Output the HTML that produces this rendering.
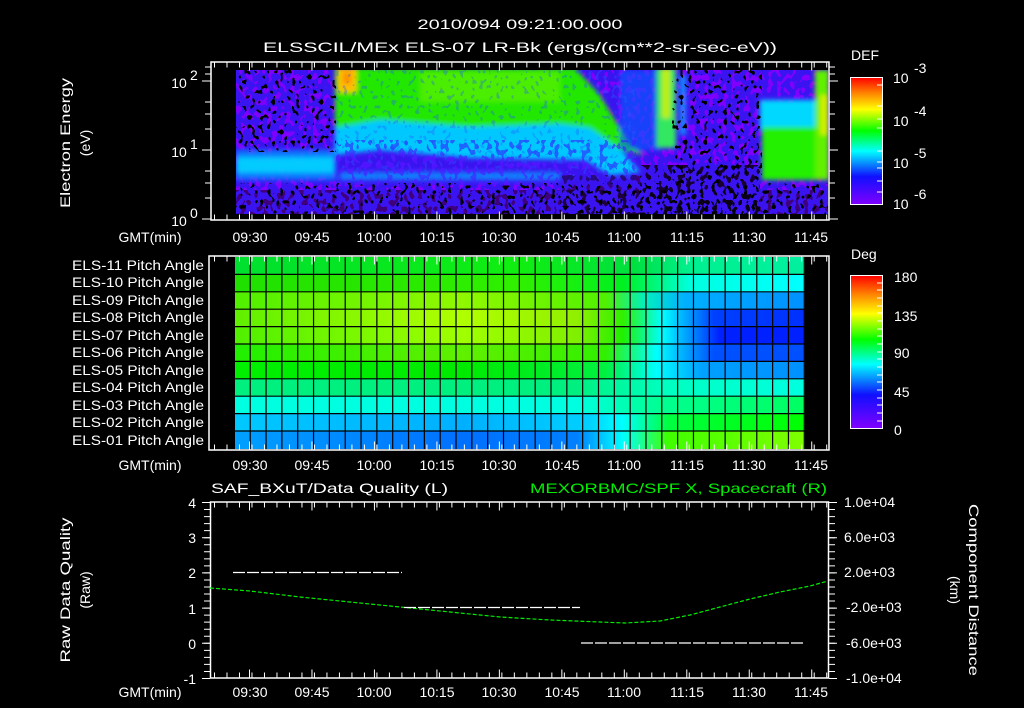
<!DOCTYPE html>
<html><head><meta charset="utf-8"><style>
html,body{margin:0;padding:0;background:#000;}
svg{display:block;}
text{font-family:"Liberation Sans",sans-serif;fill:#fff;font-size:14px;}
</style></head><body>
<svg width="1024" height="708" viewBox="0 0 1024 708" xmlns="http://www.w3.org/2000/svg">
<defs>
<filter id="blur" x="-10%" y="-10%" width="120%" height="120%"><feGaussianBlur stdDeviation="2.5"/></filter>
<filter id="spk" x="0" y="0" width="100%" height="100%">
 <feTurbulence type="fractalNoise" baseFrequency="0.22 0.16" numOctaves="1" seed="2" result="n"/>
 <feColorMatrix in="n" type="matrix" values="0 0 0 0 0 0 0 0 0 0 0 0 0 0 0 0 0 0 12 -6.2" result="m"/>
 <feComponentTransfer in="m" result="m2"><feFuncA type="discrete" tableValues="0 1"/></feComponentTransfer>
 <feComposite in="SourceGraphic" in2="m2" operator="in"/>
</filter>
<filter id="spk2" x="0" y="0" width="100%" height="100%">
 <feTurbulence type="fractalNoise" baseFrequency="0.25 0.2" numOctaves="1" seed="9" result="n"/>
 <feColorMatrix in="n" type="matrix" values="0 0 0 0 0 0 0 0 0 0 0 0 0 0 0 0 0 0 12 -7.0" result="m"/>
 <feComponentTransfer in="m" result="m2"><feFuncA type="discrete" tableValues="0 1"/></feComponentTransfer>
 <feComposite in="SourceGraphic" in2="m2" operator="in"/>
</filter>
<clipPath id="c1"><rect x="236" y="70" width="592" height="144"/></clipPath>
<linearGradient id="cb" x1="0" y1="1" x2="0" y2="0">
 <stop offset="0" stop-color="#8000ff"/><stop offset="0.22" stop-color="#1010ff"/><stop offset="0.42" stop-color="#00ffff"/>
 <stop offset="0.58" stop-color="#00ff00"/><stop offset="0.75" stop-color="#ffff00"/><stop offset="0.88" stop-color="#ff8000"/><stop offset="1" stop-color="#ff0000"/>
</linearGradient>
<linearGradient id="r1" gradientUnits="userSpaceOnUse" x1="235" x2="805" y1="0" y2="0"><stop offset="0" stop-color="#00e030"/><stop offset="0.5" stop-color="#10ee10"/><stop offset="0.7" stop-color="#00e040"/><stop offset="0.8" stop-color="#00f090"/><stop offset="1" stop-color="#00f0a0"/></linearGradient>
<linearGradient id="r2" gradientUnits="userSpaceOnUse" x1="235" x2="805" y1="0" y2="0"><stop offset="0" stop-color="#20e000"/><stop offset="0.5" stop-color="#30f000"/><stop offset="0.68" stop-color="#00f020"/><stop offset="0.8" stop-color="#00ffe0"/><stop offset="1" stop-color="#00ffff"/></linearGradient>
<linearGradient id="r3" gradientUnits="userSpaceOnUse" x1="235" x2="805" y1="0" y2="0"><stop offset="0" stop-color="#50f000"/><stop offset="0.4" stop-color="#90f800"/><stop offset="0.65" stop-color="#50f000"/><stop offset="0.72" stop-color="#00f0c0"/><stop offset="0.79" stop-color="#00b0ff"/><stop offset="1" stop-color="#0090ff"/></linearGradient>
<linearGradient id="r4" gradientUnits="userSpaceOnUse" x1="235" x2="805" y1="0" y2="0"><stop offset="0" stop-color="#60f000"/><stop offset="0.4" stop-color="#b0ff00"/><stop offset="0.6" stop-color="#90f000"/><stop offset="0.68" stop-color="#30f000"/><stop offset="0.75" stop-color="#00ffff"/><stop offset="0.84" stop-color="#0040ff"/><stop offset="1" stop-color="#0030ff"/></linearGradient>
<linearGradient id="r5" gradientUnits="userSpaceOnUse" x1="235" x2="805" y1="0" y2="0"><stop offset="0" stop-color="#50f000"/><stop offset="0.4" stop-color="#a0ff00"/><stop offset="0.6" stop-color="#80f000"/><stop offset="0.68" stop-color="#20f000"/><stop offset="0.75" stop-color="#00ffff"/><stop offset="0.85" stop-color="#0020ff"/><stop offset="1" stop-color="#0020ff"/></linearGradient>
<linearGradient id="r6" gradientUnits="userSpaceOnUse" x1="235" x2="805" y1="0" y2="0"><stop offset="0" stop-color="#20f000"/><stop offset="0.4" stop-color="#60f000"/><stop offset="0.65" stop-color="#30f000"/><stop offset="0.74" stop-color="#00ffff"/><stop offset="0.84" stop-color="#0050ff"/><stop offset="1" stop-color="#0050ff"/></linearGradient>
<linearGradient id="r7" gradientUnits="userSpaceOnUse" x1="235" x2="805" y1="0" y2="0"><stop offset="0" stop-color="#00f000"/><stop offset="0.4" stop-color="#00ea00"/><stop offset="0.65" stop-color="#00f040"/><stop offset="0.74" stop-color="#00ffff"/><stop offset="0.82" stop-color="#00a0ff"/><stop offset="1" stop-color="#0090ff"/></linearGradient>
<linearGradient id="r8" gradientUnits="userSpaceOnUse" x1="235" x2="805" y1="0" y2="0"><stop offset="0" stop-color="#00f080"/><stop offset="0.6" stop-color="#00f080"/><stop offset="0.75" stop-color="#00ffc0"/><stop offset="1" stop-color="#00ffe0"/></linearGradient>
<linearGradient id="r9" gradientUnits="userSpaceOnUse" x1="235" x2="805" y1="0" y2="0"><stop offset="0" stop-color="#00ffe0"/><stop offset="0.6" stop-color="#00ffe0"/><stop offset="0.75" stop-color="#00ff90"/><stop offset="1" stop-color="#00ff60"/></linearGradient>
<linearGradient id="r10" gradientUnits="userSpaceOnUse" x1="235" x2="805" y1="0" y2="0"><stop offset="0" stop-color="#00c8ff"/><stop offset="0.4" stop-color="#00b0ff"/><stop offset="0.62" stop-color="#00d0ff"/><stop offset="0.68" stop-color="#00ffff"/><stop offset="0.76" stop-color="#00ff40"/><stop offset="1" stop-color="#00ff00"/></linearGradient>
<linearGradient id="r11" gradientUnits="userSpaceOnUse" x1="235" x2="805" y1="0" y2="0"><stop offset="0" stop-color="#00a0ff"/><stop offset="0.4" stop-color="#0070ff"/><stop offset="0.6" stop-color="#0080ff"/><stop offset="0.68" stop-color="#00ffff"/><stop offset="0.76" stop-color="#40ff00"/><stop offset="1" stop-color="#80ff00"/></linearGradient>
</defs>

<text x="520" y="29" text-anchor="middle" textLength="205" lengthAdjust="spacingAndGlyphs">2010/094 09:21:00.000</text>
<text x="520" y="52" text-anchor="middle" textLength="514" lengthAdjust="spacingAndGlyphs">ELSSCIL/MEx ELS-07 LR-Bk  (ergs/(cm**2-sr-sec-eV))</text>

<g clip-path="url(#c1)">
 <rect x="236" y="70" width="592" height="144" fill="#3a14f0"/>
 <rect x="236" y="70" width="592" height="144" fill="#8000ff" filter="url(#spk)"/>
 <g filter="url(#blur)">
  <rect x="236" y="150" width="100" height="30" fill="#0090ff" opacity="0.8"/>
  <rect x="236" y="157" width="98" height="16" fill="#00e0ff" opacity="0.8"/>
  <polygon points="335,100 575,100 605,130 640,172 610,175 585,160 470,158 380,150 335,155" fill="#00c8ff"/>
  <polygon points="335,68 575,68 600,95 630,145 645,155 620,150 590,128 560,124 470,127 380,120 335,128" fill="#20e800"/>
  <rect x="420" y="72" width="140" height="30" fill="#60f000" opacity="0.7"/>
  <rect x="338" y="68" width="18" height="24" fill="#ffc000"/>
  <rect x="343" y="72" width="8" height="12" fill="#ff9000"/>
  <rect x="340" y="172" width="220" height="8" fill="#00b0ff" opacity="0.7"/>
  <rect x="620" y="70" width="40" height="80" fill="#0060ff" opacity="0.6"/>
  <rect x="656" y="68" width="20" height="80" fill="#30e860"/>
  <rect x="662" y="68" width="8" height="50" fill="#c0f000"/>
  <rect x="680" y="75" width="6" height="60" fill="#00c0ff" opacity="0.7"/>
  <rect x="760" y="100" width="68" height="30" fill="#00d8ff"/>
  <rect x="762" y="127" width="56" height="53" fill="#20f000"/>
  <rect x="815" y="70" width="14" height="110" fill="#60f000"/>
  <rect x="820" y="95" width="8" height="40" fill="#d0f000"/>
 </g>
 <rect x="336" y="70" width="300" height="110" fill="#2060ff" filter="url(#spk2)" opacity="0.35"/>
 <rect x="336" y="140" width="300" height="45" fill="#3020ff" filter="url(#spk)" opacity="0.6"/>
 <rect x="236" y="70" width="100" height="82" fill="#000" filter="url(#spk2)"/>
 <rect x="236" y="183" width="592" height="32" fill="#000" filter="url(#spk2)"/>
 <rect x="236" y="190" width="592" height="25" fill="#000" filter="url(#spk)" opacity="0.5"/>
 <rect x="672" y="70" width="90" height="145" fill="#000" filter="url(#spk2)"/>
 <rect x="640" y="165" width="120" height="50" fill="#000" filter="url(#spk)" opacity="0.8"/>
 <rect x="560" y="175" width="80" height="40" fill="#000" filter="url(#spk)" opacity="0.5"/>
</g>
<rect x="211" y="62" width="618" height="158" fill="none" stroke="#fff" stroke-width="1.5"/>
<g stroke="#fff" fill="none">
 <line x1="212" y1="65" x2="828" y2="65" stroke-width="5" stroke-dasharray="1 11.494" stroke-dashoffset="-2"/>
 <line x1="249" y1="66" x2="828" y2="66" stroke-width="9" stroke-dasharray="1 61.47"/>
 <line x1="212" y1="217" x2="828" y2="217" stroke-width="5" stroke-dasharray="1 11.494" stroke-dashoffset="-2"/>
 <line x1="249" y1="216" x2="828" y2="216" stroke-width="9" stroke-dasharray="1 61.47"/>
 <path d="M202 81h9M202 150h9M202 219h9M205 67h6M205 74h6M205 102h6M205 114h6M205 129h6M205 171h6M205 183h6M205 198h6M829 81h9M829 150h9M829 219h9M829 67h6M829 74h6M829 102h6M829 114h6M829 129h6M829 171h6M829 183h6M829 198h6"/>
</g>
<text x="179" y="88" text-anchor="middle">10</text><text x="190" y="80" font-size="10">2</text>
<text x="179" y="157" text-anchor="middle">10</text><text x="190" y="149" font-size="10">1</text>
<text x="179" y="226" text-anchor="middle">10</text><text x="190" y="218" font-size="10">0</text>
<text transform="translate(70,143) rotate(-90)" text-anchor="middle" font-size="15" textLength="130" lengthAdjust="spacingAndGlyphs">Electron Energy</text>
<text transform="translate(90,143) rotate(-90)" text-anchor="middle" font-size="15">(eV)</text>

<g text-anchor="middle">
<text x="150" y="242">GMT(min)</text>
<text x="250" y="242">09:30</text><text x="312" y="242">09:45</text><text x="374" y="242">10:00</text><text x="437" y="242">10:15</text><text x="499" y="242">10:30</text><text x="562" y="242">10:45</text><text x="624" y="242">11:00</text><text x="687" y="242">11:15</text><text x="749" y="242">11:30</text><text x="811" y="242">11:45</text>
</g>

<text x="851" y="60" font-size="16">DEF</text>
<rect x="850.5" y="77.5" width="32" height="127" fill="url(#cb)" stroke="#fff"/>
<g stroke="#fff"><path d="M877 85h5M877 106h5M877 119h5M877 128h5M877 151h5M877 162h5M877 168h5M877 181h5M877 192h5"/></g>
<text x="893" y="83" font-size="16">10</text><text x="914" y="73" font-size="11">-3</text>
<text x="893" y="126" font-size="16">10</text><text x="914" y="116" font-size="11">-4</text>
<text x="893" y="168" font-size="16">10</text><text x="914" y="158" font-size="11">-5</text>
<text x="893" y="209" font-size="16">10</text><text x="914" y="199" font-size="11">-6</text>

<rect x="209" y="256" width="620" height="194" fill="#000" stroke="#fff" stroke-width="1.5"/>
<rect x="235" y="257" width="570" height="17.4" fill="url(#r1)"/>
<rect x="235" y="274.4" width="570" height="17.4" fill="url(#r2)"/>
<rect x="235" y="291.8" width="570" height="17.4" fill="url(#r3)"/>
<rect x="235" y="309.2" width="570" height="17.4" fill="url(#r4)"/>
<rect x="235" y="326.6" width="570" height="17.4" fill="url(#r5)"/>
<rect x="235" y="344" width="570" height="17.4" fill="url(#r6)"/>
<rect x="235" y="361.4" width="570" height="17.4" fill="url(#r7)"/>
<rect x="235" y="378.8" width="570" height="17.4" fill="url(#r8)"/>
<rect x="235" y="396.2" width="570" height="17.4" fill="url(#r9)"/>
<rect x="235" y="413.6" width="570" height="17.4" fill="url(#r10)"/>
<rect x="235" y="431" width="570" height="18" fill="url(#r11)"/>
<g stroke="#000" stroke-width="1.2">
 <line x1="235" y1="274.4" x2="805" y2="274.4"/><line x1="235" y1="291.8" x2="805" y2="291.8"/><line x1="235" y1="309.2" x2="805" y2="309.2"/><line x1="235" y1="326.6" x2="805" y2="326.6"/><line x1="235" y1="344" x2="805" y2="344"/><line x1="235" y1="361.4" x2="805" y2="361.4"/><line x1="235" y1="378.8" x2="805" y2="378.8"/><line x1="235" y1="396.2" x2="805" y2="396.2"/><line x1="235" y1="413.6" x2="805" y2="413.6"/><line x1="235" y1="431" x2="805" y2="431"/>
 <line x1="235" y1="353" x2="806" y2="353" stroke-width="192" stroke-dasharray="1.2 14.63" stroke-dashoffset="-14.63"/>
</g>
<g stroke="#fff" fill="none">
 <line x1="212" y1="259" x2="828" y2="259" stroke-width="5" stroke-dasharray="1 11.494" stroke-dashoffset="-2"/>
 <line x1="249" y1="260" x2="828" y2="260" stroke-width="9" stroke-dasharray="1 61.47"/>
 <line x1="212" y1="447" x2="828" y2="447" stroke-width="5" stroke-dasharray="1 11.494" stroke-dashoffset="-2"/>
 <line x1="249" y1="446" x2="828" y2="446" stroke-width="9" stroke-dasharray="1 61.47"/>
</g>
<g text-anchor="end">
<text x="204" y="270" font-size="13" textLength="132" lengthAdjust="spacingAndGlyphs">ELS-11 Pitch Angle</text>
<text x="204" y="287" font-size="13" textLength="132" lengthAdjust="spacingAndGlyphs">ELS-10 Pitch Angle</text>
<text x="204" y="305" font-size="13" textLength="132" lengthAdjust="spacingAndGlyphs">ELS-09 Pitch Angle</text>
<text x="204" y="322" font-size="13" textLength="132" lengthAdjust="spacingAndGlyphs">ELS-08 Pitch Angle</text>
<text x="204" y="340" font-size="13" textLength="132" lengthAdjust="spacingAndGlyphs">ELS-07 Pitch Angle</text>
<text x="204" y="357" font-size="13" textLength="132" lengthAdjust="spacingAndGlyphs">ELS-06 Pitch Angle</text>
<text x="204" y="375" font-size="13" textLength="132" lengthAdjust="spacingAndGlyphs">ELS-05 Pitch Angle</text>
<text x="204" y="392" font-size="13" textLength="132" lengthAdjust="spacingAndGlyphs">ELS-04 Pitch Angle</text>
<text x="204" y="410" font-size="13" textLength="132" lengthAdjust="spacingAndGlyphs">ELS-03 Pitch Angle</text>
<text x="204" y="427" font-size="13" textLength="132" lengthAdjust="spacingAndGlyphs">ELS-02 Pitch Angle</text>
<text x="204" y="445" font-size="13" textLength="132" lengthAdjust="spacingAndGlyphs">ELS-01 Pitch Angle</text>
</g>
<g text-anchor="middle">
<text x="150" y="470">GMT(min)</text>
<text x="250" y="470">09:30</text><text x="312" y="470">09:45</text><text x="374" y="470">10:00</text><text x="437" y="470">10:15</text><text x="499" y="470">10:30</text><text x="562" y="470">10:45</text><text x="624" y="470">11:00</text><text x="687" y="470">11:15</text><text x="749" y="470">11:30</text><text x="811" y="470">11:45</text>
</g>

<text x="851" y="259" font-size="16">Deg</text>
<rect x="850.5" y="275.5" width="32" height="153" fill="url(#cb)" stroke="#fff"/>
<g stroke="#fff"><path d="M877 283h5M877 290h5M877 298h5M877 306h5M877 321h5M877 329h5M877 336h5M877 344h5M877 352h5M877 367h5M877 375h5M877 382h5M877 390h5M877 398h5M877 413h5M877 421h5M877 313h5M877 359h5M877 405h5"/></g>
<text x="894" y="282" font-size="16">180</text>
<text x="894" y="321" font-size="16">135</text>
<text x="894" y="358" font-size="16">90</text>
<text x="894" y="397" font-size="16">45</text>
<text x="894" y="435" font-size="16">0</text>

<text x="211" y="493" font-size="15" textLength="237" lengthAdjust="spacingAndGlyphs">SAF_BXuT/Data Quality (L)</text>
<text x="530" y="493" font-size="15" style="fill:#00ee00" textLength="297" lengthAdjust="spacingAndGlyphs">MEXORBMC/SPF X, Spacecraft (R)</text>
<rect x="210.5" y="502" width="618" height="176" fill="none" stroke="#fff" stroke-width="1.5"/>
<g stroke="#fff" fill="none">
 <line x1="212" y1="505" x2="828" y2="505" stroke-width="5" stroke-dasharray="1 11.494" stroke-dashoffset="-2"/>
 <line x1="249" y1="506" x2="828" y2="506" stroke-width="9" stroke-dasharray="1 61.47"/>
 <line x1="212" y1="675" x2="828" y2="675" stroke-width="5" stroke-dasharray="1 11.494" stroke-dashoffset="-2"/>
 <line x1="249" y1="674" x2="828" y2="674" stroke-width="9" stroke-dasharray="1 61.47"/>
 <line x1="207" y1="502" x2="207" y2="679" stroke-width="6" stroke-dasharray="1 6.04"/>
 <line x1="206" y1="502" x2="206" y2="679" stroke-width="8" stroke-dasharray="1 34.2"/>
 <line x1="832" y1="502" x2="832" y2="679" stroke-width="6" stroke-dasharray="1 6.04"/>
 <line x1="833" y1="502" x2="833" y2="679" stroke-width="8" stroke-dasharray="1 34.2"/>
</g>
<polyline points="210,588 250,591 300,597 350,602 400,607 450,612 500,617 550,620 600,622 625,623 660,621 690,615 720,607 750,599 780,592 810,586 828,581" fill="none" stroke="#00ee00" stroke-width="1.2" stroke-dasharray="4 2"/>
<g stroke="#fff" stroke-width="1.2" stroke-dasharray="12 2">
 <line x1="233" y1="572.5" x2="402" y2="572.5"/>
 <line x1="404" y1="607.5" x2="580" y2="607.5"/>
 <line x1="581" y1="643" x2="803" y2="643"/>
</g>
<g text-anchor="end">
<text x="196" y="508" font-size="15">4</text><text x="196" y="543" font-size="15">3</text><text x="196" y="578" font-size="15">2</text><text x="196" y="614" font-size="15">1</text><text x="196" y="649" font-size="15">0</text><text x="196" y="684" font-size="15">-1</text>
</g>
<g>
<text x="844" y="507" font-size="13">1.0e+04</text><text x="844" y="542" font-size="13">6.0e+03</text><text x="844" y="577" font-size="13">2.0e+03</text><text x="846" y="612" font-size="13">-2.0e+03</text><text x="846" y="648" font-size="13">-6.0e+03</text><text x="846" y="683" font-size="13">-1.0e+04</text>
</g>
<text transform="translate(70,590) rotate(-90)" text-anchor="middle" font-size="15" textLength="145" lengthAdjust="spacingAndGlyphs">Raw Data Quality</text>
<text transform="translate(90,590) rotate(-90)" text-anchor="middle" font-size="15">(Raw)</text>
<text transform="translate(969,590) rotate(90)" text-anchor="middle" font-size="15" textLength="172" lengthAdjust="spacingAndGlyphs">Component Distance</text>
<text transform="translate(950,590) rotate(90)" text-anchor="middle" font-size="15">(km)</text>
<g text-anchor="middle">
<text x="150" y="697">GMT(min)</text>
<text x="250" y="697">09:30</text><text x="312" y="697">09:45</text><text x="374" y="697">10:00</text><text x="437" y="697">10:15</text><text x="499" y="697">10:30</text><text x="562" y="697">10:45</text><text x="624" y="697">11:00</text><text x="687" y="697">11:15</text><text x="749" y="697">11:30</text><text x="811" y="697">11:45</text>
</g>
</svg>
</body></html>
